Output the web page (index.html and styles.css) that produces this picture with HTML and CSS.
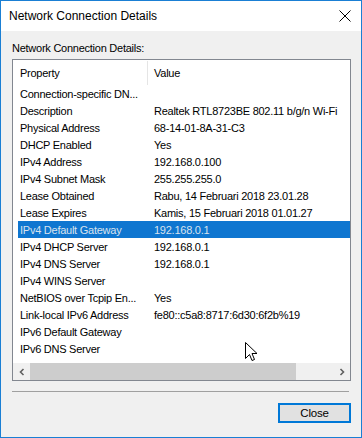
FILE: index.html
```html
<!DOCTYPE html>
<html>
<head>
<meta charset="utf-8">
<link rel="stylesheet" href="styles.css">
</head>
<body>
<div class="window">
  <div class="titlebar">
    <span class="title">Network Connection Details</span>
    <svg class="close-x" width="12" height="12" viewBox="0 0 12 12"><path d="M0.5 0.5 L11.5 11.5 M11.5 0.5 L0.5 11.5" stroke="#000" stroke-width="1" fill="none"/></svg>
  </div>
  <div class="body">
    <div class="label">Network Connection Details:</div>
    <div class="listbox">
      <div class="list">
        <div class="header">
          <div class="hcell c1">Property</div>
          <div class="hsep"></div>
          <div class="hcell c2">Value</div>
        </div>
        <div class="rows">
          <div class="row"><div class="c1">Connection-specific DN...</div><div class="c2"></div></div>
          <div class="row"><div class="c1">Description</div><div class="c2">Realtek RTL8723BE 802.11 b/g/n Wi-Fi</div></div>
          <div class="row"><div class="c1">Physical Address</div><div class="c2">68-14-01-8A-31-C3</div></div>
          <div class="row"><div class="c1">DHCP Enabled</div><div class="c2">Yes</div></div>
          <div class="row"><div class="c1">IPv4 Address</div><div class="c2">192.168.0.100</div></div>
          <div class="row"><div class="c1">IPv4 Subnet Mask</div><div class="c2">255.255.255.0</div></div>
          <div class="row"><div class="c1">Lease Obtained</div><div class="c2">Rabu, 14 Februari 2018 23.01.28</div></div>
          <div class="row"><div class="c1">Lease Expires</div><div class="c2">Kamis, 15 Februari 2018 01.01.27</div></div>
          <div class="row selected"><div class="c1">IPv4 Default Gateway</div><div class="c2">192.168.0.1</div></div>
          <div class="row"><div class="c1">IPv4 DHCP Server</div><div class="c2">192.168.0.1</div></div>
          <div class="row"><div class="c1">IPv4 DNS Server</div><div class="c2">192.168.0.1</div></div>
          <div class="row"><div class="c1">IPv4 WINS Server</div><div class="c2"></div></div>
          <div class="row"><div class="c1">NetBIOS over Tcpip En...</div><div class="c2">Yes</div></div>
          <div class="row"><div class="c1">Link-local IPv6 Address</div><div class="c2">fe80::c5a8:8717:6d30:6f2b%19</div></div>
          <div class="row"><div class="c1">IPv6 Default Gateway</div><div class="c2"></div></div>
          <div class="row"><div class="c1">IPv6 DNS Server</div><div class="c2"></div></div>
        </div>
      </div>
      <div class="hscroll">
        <div class="arrow"><svg width="8" height="8" viewBox="0 0 8 8"><path d="M5.5 1 L2.5 4 L5.5 7" stroke="#606060" stroke-width="1.6" fill="none"/></svg></div>
        <div class="track"><div class="thumb"></div></div>
        <div class="arrow"><svg width="8" height="8" viewBox="0 0 8 8"><path d="M2.5 1 L5.5 4 L2.5 7" stroke="#606060" stroke-width="1.6" fill="none"/></svg></div>
      </div>
    </div>
    <div class="separator"></div>
    <div class="buttons">
      <button class="btn">Close</button>
    </div>
  </div>
  <svg class="cursor" width="13" height="20" viewBox="0 0 13 20"><path d="M0.5 0.5 L0.5 16.5 L4.5 12.5 L7 18.5 L9.5 17.5 L7 11.5 L12 11.5 Z" fill="#fff" stroke="#000" stroke-width="1"/></svg>
</div>
</body>
</html>
```

FILE: styles.css
```css
* { box-sizing: border-box; }
html, body { margin: 0; padding: 0; }
body {
  width: 362px;
  height: 438px;
  overflow: hidden;
  font-family: "Liberation Sans", Arial, sans-serif;
  font-size: 11px;
  letter-spacing: -0.25px;
  color: #000;
}
.window {
  position: relative;
  width: 362px;
  height: 438px;
  border: 1px solid #1a7fd4;
  display: flex;
  flex-direction: column;
  background: #f0f0f0;
}
.titlebar {
  height: 30px;
  background: #fff;
  display: flex;
  align-items: center;
  justify-content: space-between;
  padding: 0 10px 0 8px;
  flex: none;
}
.title { font-size: 12px; letter-spacing: 0; }
.close-x { display: block; }
.body {
  flex: 1;
  padding: 10px 10px 0 11px;
  display: flex;
  flex-direction: column;
}
.label {
  height: 18px;
  line-height: 14px;
}
.listbox {
  width: 339px;
  height: 322px;
  border: 1px solid #828790;
  background: #fff;
  display: flex;
  flex-direction: column;
}
.list {
  flex: 1;
  overflow: hidden;
  padding-left: 5px;
}
.header {
  height: 25px;
  display: flex;
  align-items: center;
}
.hcell.c1 { width: 129px; padding-left: 2px; }
.hsep {
  width: 1px;
  height: 24px;
  background: #e5e5e5;
  align-self: flex-start;
  margin-top: 1px;
}
.hcell.c2 { padding-left: 6px; }
.row {
  height: 17px;
  display: flex;
  align-items: center;
  white-space: nowrap;
}
.row .c1 { width: 134px; padding-left: 2px; flex: none; }
.row .c2 { padding-left: 2px; }
.row.selected {
  background: #0f76d0;
  color: #d8e2ee;
}
.hscroll {
  height: 17px;
  display: flex;
  background: #f0f0f0;
  flex: none;
}
.arrow {
  width: 17px;
  display: flex;
  align-items: center;
  justify-content: center;
}
.track {
  flex: 1;
  padding-right: 37px;
}
.thumb {
  width: 266px;
  height: 100%;
  background: #cdcdcd;
}
.separator {
  margin-top: 10px;
  width: 337px;
  height: 1px;
  background: #a0a0a0;
}
.buttons {
  display: flex;
  justify-content: flex-end;
  padding-top: 11px;
}
.btn {
  width: 73px;
  height: 20px;
  border: 2px solid #0078d7;
  background: #e1e1e1;
  font-family: "Liberation Sans", Arial, sans-serif;
  font-size: 11.5px;
  letter-spacing: -0.2px;
  color: #000;
  padding: 0;
}
.cursor {
  position: absolute;
  left: 244px;
  top: 341px;
}
```
